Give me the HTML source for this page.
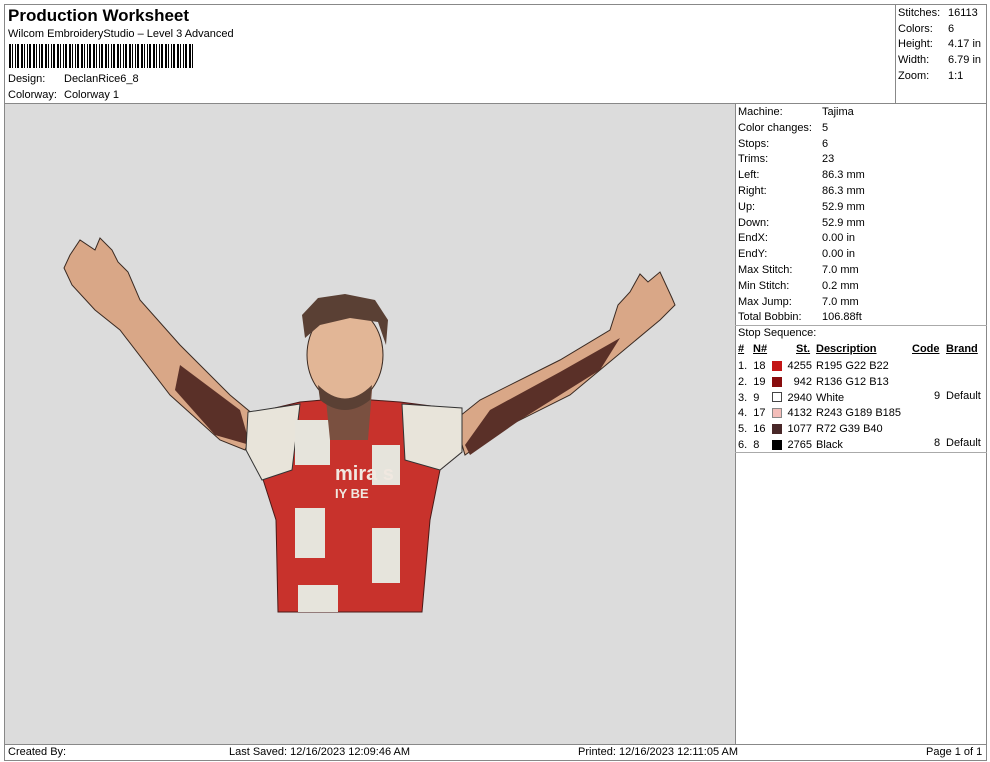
<!DOCTYPE html>
<html><head><meta charset="utf-8"><style>
*{margin:0;padding:0;box-sizing:border-box}
body{width:990px;height:762px;background:#fff;font-family:"Liberation Sans",Arial,sans-serif;font-size:11px;color:#000;position:relative;overflow:hidden}
.a{position:absolute;white-space:nowrap}
.ln{position:absolute;background:#888}
u{text-decoration:underline}
</style></head><body>
<div class="ln" style="left:4px;top:4px;width:983px;height:1px"></div>
<div class="ln" style="left:4px;top:4px;width:1px;height:756px"></div>
<div class="ln" style="left:986px;top:4px;width:1px;height:756px"></div>
<div class="ln" style="left:4px;top:103px;width:983px;height:1px"></div>
<div class="ln" style="left:895px;top:4px;width:1px;height:100px"></div>
<div class="ln" style="left:4px;top:744px;width:983px;height:1px"></div>
<div class="ln" style="left:4px;top:760px;width:983px;height:1px"></div>
<div class="ln" style="left:735px;top:104px;width:1px;height:640px"></div>
<div class="ln" style="left:735px;top:325px;width:252px;height:1px;background:#aaa"></div>
<div class="ln" style="left:735px;top:452px;width:252px;height:1px;background:#aaa"></div>

<div class="a" style="left:8px;top:6px;font-size:17px;font-weight:bold">Production Worksheet</div>
<div class="a" style="left:8px;top:28px">Wilcom EmbroideryStudio – Level 3 Advanced</div>
<div class="a" style="left:9px;top:44px;width:185px;height:24px;background:repeating-linear-gradient(90deg,#000 0 2px,#fff 2px 3px,#000 3px 4px,#fff 4px 6px,#000 6px 7px,#fff 7px 8px,#000 8px 10px,#fff 10px 12px)"></div>
<div class="a" style="left:8px;top:73px">Design:</div><div class="a" style="left:64px;top:73px">DeclanRice6_8</div>
<div class="a" style="left:8px;top:89px">Colorway:</div><div class="a" style="left:64px;top:89px">Colorway 1</div>

<div class="a" style="left:898px;top:6px;line-height:15.7px">Stitches:<br>Colors:<br>Height:<br>Width:<br>Zoom:</div>
<div class="a" style="left:948px;top:6px;line-height:15.7px">16113<br>6<br>4.17 in<br>6.79 in<br>1:1</div>

<div class="a" style="left:5px;top:104px;width:730px;height:640px;background:#dcdcdc"></div>
<svg class="a" style="left:0;top:0" width="990" height="762">
<path d="M70 255 L80 240 L95 250 L100 238 L112 250 L118 262 L128 272 L140 300 L180 345 L230 395 L260 420 L245 450 L220 440 L170 395 L120 330 L95 310 L72 285 L64 268 Z" fill="#d9a787" stroke="#3a2a22" stroke-width="1"/>
<path d="M180 365 L240 410 L250 445 L215 435 L175 390 Z" fill="#5a3028"/>
<path d="M672 298 L660 272 L648 282 L640 274 L630 292 L618 305 L610 330 L560 360 L480 400 L455 420 L465 455 L500 430 L570 395 L630 345 L660 320 L675 305 Z" fill="#d9a787" stroke="#3a2a22" stroke-width="1"/>
<path d="M620 338 L560 372 L490 410 L465 445 L470 455 L520 420 L600 370 Z" fill="#5a3028"/>
<path d="M258 412 L300 402 L345 398 L400 402 L462 410 L462 452 L440 470 L430 520 L422 612 L278 612 L276 520 L260 470 Z" fill="#c8322c" stroke="#4a1a18"/>
<path d="M248 412 L300 404 L292 470 L262 480 L246 450 Z" fill="#e8e4da" stroke="#333"/>
<path d="M402 404 L462 408 L462 452 L440 470 L405 460 Z" fill="#e8e4da" stroke="#333"/>
<rect x="295" y="420" width="35" height="45" fill="#e6e4dc"/>
<rect x="372" y="445" width="28" height="40" fill="#e6e4dc"/>
<rect x="295" y="508" width="30" height="50" fill="#e6e4dc"/>
<rect x="372" y="528" width="28" height="55" fill="#e6e4dc"/>
<rect x="298" y="585" width="40" height="27" fill="#e6e4dc"/>
<text x="335" y="480" fill="#f0e8e0" font-weight="bold" font-size="20" font-family="Liberation Sans">mira s</text>
<text x="335" y="498" fill="#f0e8e0" font-weight="bold" font-size="13" font-family="Liberation Sans">IY BE</text>
<path d="M325 390 L372 390 L368 440 L330 440 Z" fill="#7a5040"/>
<ellipse cx="345" cy="355" rx="38" ry="48" fill="#e2b696" stroke="#3a2a22"/>
<path d="M305 338 L302 315 L318 298 L345 294 L375 300 L388 320 L386 345 L378 322 L350 318 L320 325 Z" fill="#5a4034"/>
<path d="M318 385 Q345 412 372 385 L370 400 Q345 420 320 400 Z" fill="#5a4034"/>
</svg>

<div class="a" style="left:738px;top:105px;line-height:15.8px">Machine:<br>Color changes:<br>Stops:<br>Trims:<br>Left:<br>Right:<br>Up:<br>Down:<br>EndX:<br>EndY:<br>Max Stitch:<br>Min Stitch:<br>Max Jump:<br>Total Bobbin:</div>
<div class="a" style="left:822px;top:105px;line-height:15.8px">Tajima<br>5<br>6<br>23<br>86.3 mm<br>86.3 mm<br>52.9 mm<br>52.9 mm<br>0.00 in<br>0.00 in<br>7.0 mm<br>0.2 mm<br>7.0 mm<br>106.88ft</div>

<div class="a" style="left:738px;top:327px">Stop Sequence:</div>
<div class="a" style="left:738px;top:343px;font-weight:bold"><u>#</u></div>
<div class="a" style="left:753px;top:343px;font-weight:bold"><u>N#</u></div>
<div class="a" style="left:796px;top:343px;font-weight:bold"><u>St.</u></div>
<div class="a" style="left:816px;top:343px;font-weight:bold"><u>Description</u></div>
<div class="a" style="left:912px;top:343px;font-weight:bold"><u>Code</u></div>
<div class="a" style="left:946px;top:343px;font-weight:bold"><u>Brand</u></div>
<div class="a" style="left:738px;top:359px;line-height:15.8px">1.&nbsp; 18<br>2.&nbsp; 19<br>3.&nbsp; 9<br>4.&nbsp; 17<br>5.&nbsp; 16<br>6.&nbsp; 8</div>
<div class="a" style="left:772px;top:361px;width:10px;height:10px;background:#c31616"></div>
<div class="a" style="left:772px;top:377px;width:10px;height:10px;background:#880c0d"></div>
<div class="a" style="left:772px;top:392px;width:10px;height:10px;background:#fff;border:1px solid #444"></div>
<div class="a" style="left:772px;top:408px;width:10px;height:10px;background:#f3bdb9;border:1px solid #888"></div>
<div class="a" style="left:772px;top:424px;width:10px;height:10px;background:#482728"></div>
<div class="a" style="left:772px;top:440px;width:10px;height:10px;background:#000"></div>
<div class="a" style="left:784px;top:359px;line-height:15.8px;width:28px;text-align:right">4255<br>942<br>2940<br>4132<br>1077<br>2765</div>
<div class="a" style="left:816px;top:359px;line-height:15.8px">R195 G22 B22<br>R136 G12 B13<br>White<br>R243 G189 B185<br>R72 G39 B40<br>Black</div>
<div class="a" style="left:934px;top:390px">9</div><div class="a" style="left:946px;top:390px">Default</div>
<div class="a" style="left:934px;top:437px">8</div><div class="a" style="left:946px;top:437px">Default</div>

<div class="a" style="left:8px;top:746px">Created By:</div>
<div class="a" style="left:229px;top:746px">Last Saved: 12/16/2023 12:09:46 AM</div>
<div class="a" style="left:578px;top:746px">Printed: 12/16/2023 12:11:05 AM</div>
<div class="a" style="left:926px;top:746px">Page 1 of 1</div>
</body></html>
